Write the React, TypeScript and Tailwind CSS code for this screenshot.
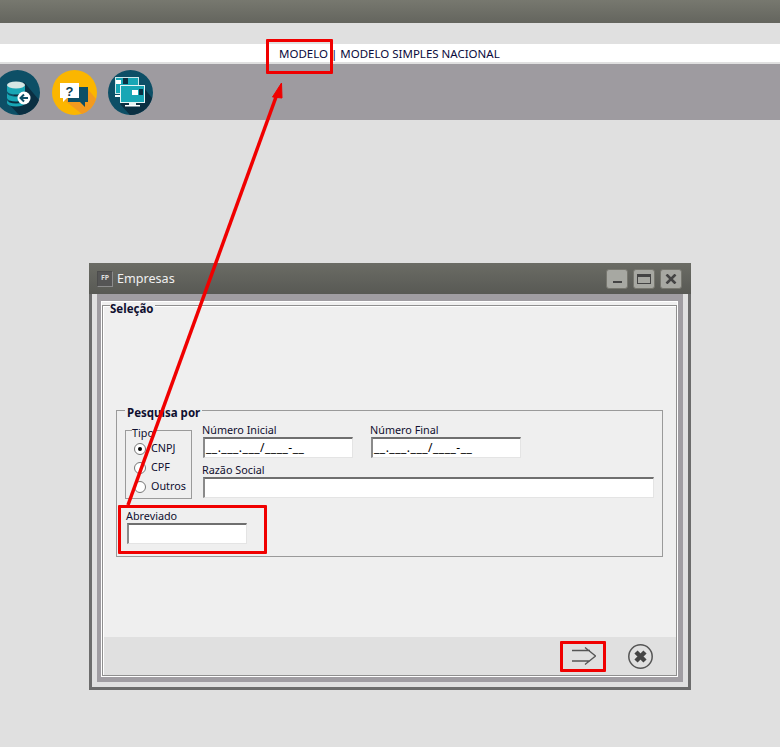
import React from 'react';

const font = { fontFamily: '"Noto Sans", Tahoma, sans-serif' };

const MASK = '__.___.___/____-__';

const DbIcon = () => (
  <svg width="45" height="45" viewBox="0 0 45 45" className="block">
    <circle cx="22.5" cy="22.5" r="22.5" fill="#0d4f66" />
    <path d="M29 12 L44 30 A22.5 22.5 0 0 1 24 45 L13 33 Z" fill="#0a2f42" />
    <path d="M12 15 h18 v6 a9 3.5 0 0 1 -18 0 Z" fill="#18a6b5" />
    <path d="M12 23 a9 3.5 0 0 0 18 0 v5 a9 3.5 0 0 1 -18 0 Z" fill="#18a6b5" />
    <path d="M12 30 a9 3.5 0 0 0 18 0 v3 a9 3.5 0 0 1 -18 0 Z" fill="#18a6b5" />
    <ellipse cx="21" cy="15" rx="9" ry="3.5" fill="#d6e6e4" />
    <circle cx="29" cy="28" r="6.5" fill="#ffffff" />
    <path d="M33 28 H26 M29 24.5 L25.5 28 L29 31.5" stroke="#0d4f66" strokeWidth="2" fill="none" />
  </svg>
);

const HelpIcon = () => (
  <svg width="45" height="45" viewBox="0 0 45 45" className="block">
    <circle cx="22.5" cy="22.5" r="22.5" fill="#fbb600" />
    <path d="M12 30 L30 44 A22.5 22.5 0 0 0 44 29 L35 18 Z" fill="#f39a1f" />
    <path d="M16 17 H36 V32 H33 V37 L28 32 H16 Z" fill="#0d4f66" />
    <path d="M8 13 H27 V28 H15 L11 32 V28 H8 Z" fill="#ffffff" />
    <text x="17.5" y="25.5" textAnchor="middle" fontSize="13" fontWeight="700" fill="#0d3b52" fontFamily="Liberation Sans, sans-serif">?</text>
  </svg>
);

const ScreensIcon = () => (
  <svg width="45" height="45" viewBox="0 0 45 45" className="block">
    <circle cx="22.5" cy="22.5" r="22.5" fill="#0d4f66" />
    <path d="M12 34 L22 45 A22.5 22.5 0 0 0 44 28 L36 18 Z" fill="#0a2f42" />
    <rect x="7.5" y="7.5" width="23" height="16" fill="#18a6b5" stroke="#cfe8ea" strokeWidth="1" />
    <rect x="8" y="10" width="5" height="4" fill="#ffffff" />
    <rect x="15" y="8" width="5" height="6" fill="#0a2f42" />
    <rect x="7" y="25" width="5" height="2" fill="#ffffff" />
    <rect x="12.5" y="15.5" width="24" height="17" fill="#18a6b5" stroke="#e6f4f5" strokeWidth="1" />
    <rect x="24" y="20" width="6" height="5" fill="#ffffff" />
    <rect x="31" y="19" width="4" height="6" fill="#0a2f42" />
    <rect x="21" y="33" width="7" height="2" fill="#e6f4f5" />
    <rect x="17" y="35" width="15" height="1.5" fill="#ffffff" />
  </svg>
);

const WinButton = ({ children }: { children: React.ReactNode }) => (
  <div className="flex h-[20px] w-[22px] items-center justify-center rounded-[3px] border border-[#77776f] bg-[#a7a8a2]">
    {children}
  </div>
);

const MaskField = ({ label, value, width }: { label: string; value?: string; width: string }) => (
  <div className={`flex flex-col ${width}`}>
    <span className="-ml-[1px] h-[14px] text-[10.8px] leading-[14px] text-[#101030]">{label}</span>
    <div className="h-[21px] border-t-2 border-l-2 border-r border-b border-t-[#6f6f6f] border-l-[#8a8a8a] border-r-[#e4e4e4] border-b-[#e4e4e4] bg-white pl-[1px] text-[12px] leading-[18px] tracking-[0.5px] text-black">
      {value}
    </div>
  </div>
);

const Radio = ({ label, checked }: { label: string; checked?: boolean }) => (
  <div className="flex h-[19px] items-center gap-[5px]">
    <span className="flex h-[12px] w-[12px] items-center justify-center rounded-full border border-[#777] bg-white">
      {checked && <span className="h-[4px] w-[4px] rounded-full bg-black" />}
    </span>
    <span className="text-[10.8px] text-[#101030]">{label}</span>
  </div>
);

const Annotations = () => (
  <>
    <div className="absolute left-[266px] top-[39px] h-[35px] w-[67px] rounded-[1px] border-[3px] border-[#f00000]" />
    <div className="absolute left-[118px] top-[505px] h-[49px] w-[149px] rounded-[1px] border-[3px] border-[#f00000]" />
    <div className="absolute left-[560px] top-[641px] h-[31px] w-[46px] rounded-[1px] border-[3px] border-[#f00000]" />
    <svg width="780" height="747" className="absolute left-0 top-0">
      <path d="M128 505 L276 97" stroke="#f00000" strokeWidth="3.5" fill="none" />
      <path d="M281.5 83 L282 98 L272.5 97 Z" fill="#f00000" stroke="#f00000" strokeWidth="1" />
    </svg>
  </>
);

export default function App() {
  return (
    <div className="relative h-[747px] w-[780px] overflow-hidden bg-[#e0e0e0]" style={font}>
      <div className="h-[23px] bg-gradient-to-b from-[#77786f] to-[#64655e]" />
      <div className="mt-[21px] flex h-[18px] items-center bg-white pl-[279px] pt-[2px] text-[11.5px] text-[#0a0a3c]">
        MODELO | MODELO SIMPLES NACIONAL
      </div>
      <div className="mt-[2px] flex h-[56px] items-center bg-[#9e9ba0]">
        <div className="-ml-[5px]"><DbIcon /></div>
        <div className="ml-[12px]"><HelpIcon /></div>
        <div className="ml-[11px]"><ScreensIcon /></div>
      </div>

      <div className="ml-[89px] mt-[143px] flex h-[427px] w-[602px] flex-col">
        <div className="flex h-[31px] shrink-0 items-center bg-gradient-to-b from-[#6b6c65] to-[#585954] pl-[8px] pr-[9px]">
          <div className="flex h-[16px] w-[16px] items-center justify-center border border-[#8c8c8c] border-t-[#4c4c4c] border-l-[#4c4c4c] bg-[#555] text-[7px] font-bold text-[#dddddd]">
            FP
          </div>
          <span className="ml-[4px] pt-[2px] text-[12.6px] text-[#f0f0f0]">Empresas</span>
          <div className="ml-auto flex gap-[5px]">
            <WinButton>
              <span className="mt-[7px] h-[2px] w-[9px] bg-[#444]" />
            </WinButton>
            <WinButton>
              <span className="h-[10px] w-[14px] border border-t-[3px] border-[#444]" />
            </WinButton>
            <WinButton>
              <svg width="12" height="10" viewBox="0 0 12 10">
                <path d="M1.5 0.5 L10.5 9.5 M10.5 0.5 L1.5 9.5" stroke="#444" strokeWidth="2.6" />
              </svg>
            </WinButton>
          </div>
        </div>

        <div className="min-h-0 flex-1 border-x-[3px] border-b-[3px] border-[#6c6c6c] bg-[#e0e0e0] px-[5px] pb-[5px]">
          <div className="h-full border-b-[5px] border-l-[4px] border-r-[5px] border-t-[7px] border-[#a09da2]">
            <div className="flex h-full flex-col border border-white bg-[#efefef] pt-[3px]">
              <div className="relative min-h-0 flex-1 border border-[#8f8f8f]">
                <span className="absolute left-[7px] -top-[4px] bg-[#efefef] pr-[1px] text-[11.5px] font-bold leading-[14px] text-[#101030]">
                  Seleção
                </span>
                <div className="flex h-full flex-col border-l border-t border-white">
                  <div className="relative ml-[12px] mr-[13px] mt-[103px] h-[147px] border border-[#9a9a9a] pl-[8px]">
                    <span className="absolute left-[8px] -top-[5px] bg-[#efefef] px-[2px] text-[11.5px] font-bold leading-[14px] text-[#101030]">
                      Pesquisa por
                    </span>
                    <div className="flex items-start gap-[11px]">
                      <div className="relative mt-[19px] h-[69px] w-[67px] shrink-0 border border-[#9a9a9a] pl-[8px] pt-[8px]">
                        <span className="absolute left-[6px] -top-[5px] bg-[#efefef] text-[10.8px] leading-[14px] text-[#101030]">
                          Tipo
                        </span>
                        <Radio label="CNPJ" checked />
                        <Radio label="CPF" />
                        <Radio label="Outros" />
                      </div>
                      <div className="mt-[12px] flex flex-col">
                        <div className="flex gap-[18px]">
                          <MaskField label="Número Inicial" value={MASK} width="w-[150px]" />
                          <MaskField label="Número Final" value={MASK} width="w-[150px]" />
                        </div>
                        <MaskField label="Razão Social" width="w-[451px] mt-[5px]" />
                      </div>
                    </div>
                    <div className="ml-[1px] mt-[10px]">
                      <MaskField label="Abreviado" width="w-[120px] ml-[1px]" />
                    </div>
                  </div>
                  <div className="mt-auto flex h-[38px] items-center justify-end gap-[32px] bg-[#e0e0e0] pr-[23px]">
                    <svg width="24" height="18" viewBox="0 0 24 18">
                      <path d="M0 3.5 H18 M0 14 H18 M13 0.5 L23.5 9 L13 17.5" stroke="#555" strokeWidth="1.3" fill="none" />
                    </svg>
                    <svg width="25" height="25" viewBox="0 0 25 25">
                      <circle cx="12.5" cy="12.5" r="11.7" fill="none" stroke="#555" strokeWidth="1.5" />
                      <path d="M8 8 L17 17 M17 8 L8 17" stroke="#444" strokeWidth="4.5" />
                    </svg>
                  </div>
                </div>
              </div>
            </div>
          </div>
        </div>
      </div>
      <Annotations />
    </div>
  );
}
